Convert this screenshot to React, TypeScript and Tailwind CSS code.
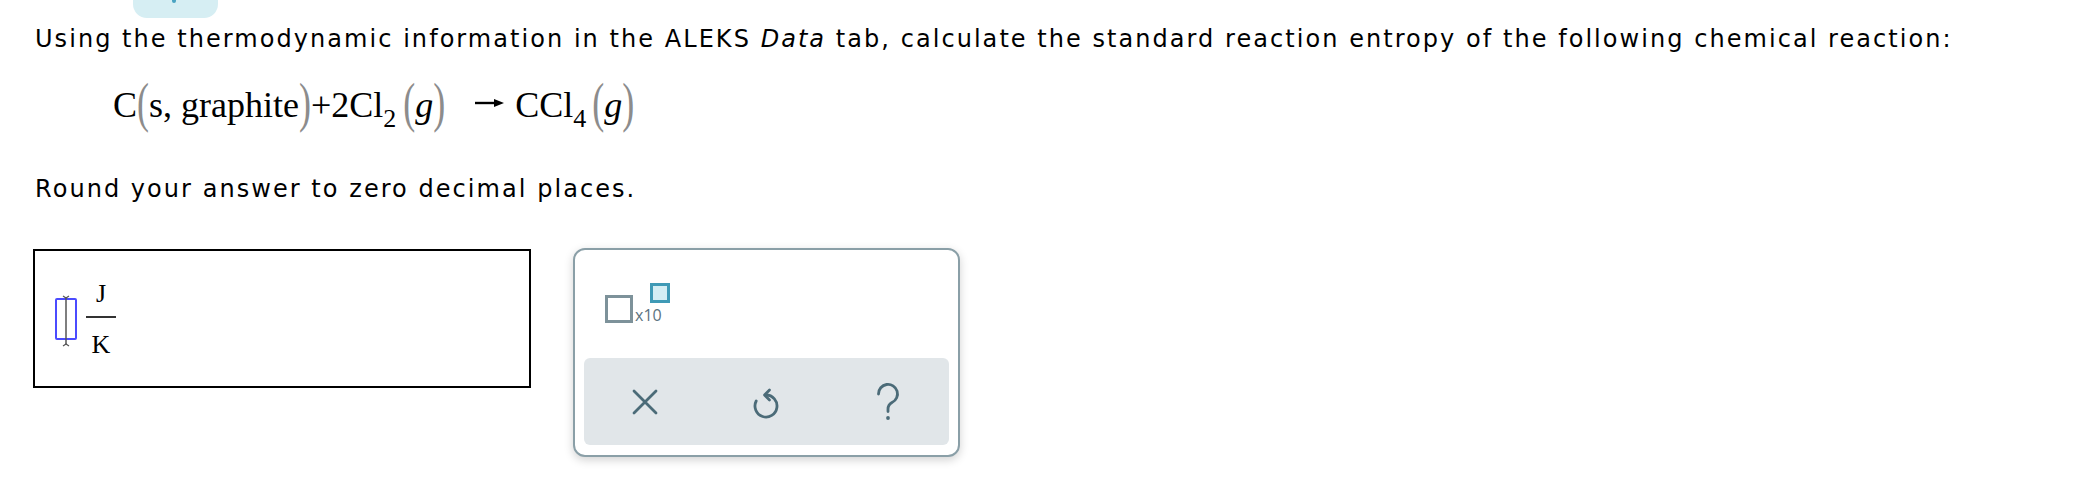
const serif = "font-['Liberation_Serif','Times_New_Roman',serif]";

function Paren({ children }: { children: string }) {
  return (
    <span className="inline-block -translate-y-[2px] scale-y-[1.5] text-[#8c8c8c]">
      {children}
    </span>
  );
}

function Equation() {
  return (
    <div className={`${serif} pl-[113px] text-[36px] leading-[48px] text-black`}>
      <span>C</span>
      <Paren>(</Paren>
      <span>s, graphite</span>
      <Paren>)</Paren>
      <span>+2Cl</span>
      <sub className="relative top-[10px] text-[26px]">2</sub>
      <span className="ml-[7px]" />
      <Paren>(</Paren>
      <i>g</i>
      <Paren>)</Paren>
      <svg
        className="ml-[29px] mr-[10px] inline-block align-[9px]"
        width="31"
        height="10"
        viewBox="0 0 31 10"
      >
        <line x1="1" y1="5" x2="23" y2="5" stroke="#000" strokeWidth="2.4" />
        <path d="M20 1 L30 5 L20 9 Z" fill="#000" />
      </svg>
      <span>CCl</span>
      <sub className="relative top-[10px] text-[26px]">4</sub>
      <span className="ml-[6px]" />
      <Paren>(</Paren>
      <i>g</i>
      <Paren>)</Paren>
    </div>
  );
}

function CursorSlot() {
  return (
    <div className="relative h-[42px] w-[22px] rounded-[2px] border-2 border-[#4b4bff]">
      <svg
        className="absolute left-[3px] top-[-5px]"
        width="12"
        height="52"
        viewBox="0 0 12 52"
      >
        <line x1="6" y1="2" x2="6" y2="50" stroke="#555" strokeWidth="1.5" />
        <path d="M3 1 L6 3 L9 1 M3 51 L6 49 L9 51" stroke="#555" strokeWidth="1.2" fill="none" />
      </svg>
    </div>
  );
}

function ClearIcon() {
  return (
    <svg width="26" height="26" viewBox="0 0 26 26" fill="none" stroke="#4b6b78" strokeWidth="2.8" strokeLinecap="round">
      <path d="M2 2 L24 24 M24 2 L2 24" />
    </svg>
  );
}

function UndoIcon() {
  return (
    <svg width="28" height="34" viewBox="0 0 28 34" fill="none" stroke="#4b6b78" strokeWidth="2.8" strokeLinecap="round" strokeLinejoin="round">
      <path d="M14 10 A11 11 0 1 1 4.2 16" />
      <path d="M17.5 5 L12.5 10 L17.5 15" />
    </svg>
  );
}

function HelpIcon() {
  return (
    <svg width="26" height="40" viewBox="0 0 26 40" fill="none" stroke="#4b6b78" strokeWidth="2.8" strokeLinecap="round">
      <path d="M3.5 12 A9.5 9.5 0 1 1 17 20.5 C14.5 22 13 24 13 27 V29.5" />
      <circle cx="13" cy="36" r="1.9" fill="#4b6b78" stroke="none" />
    </svg>
  );
}

export default function App() {
  return (
    <div className="h-[480px] w-[2078px] bg-white font-['DejaVu_Sans','Verdana',sans-serif] text-black">
      <div className="relative ml-[133px] h-[18px] w-[85px] rounded-b-[14px] bg-[#d6eef3]">
        <span className="absolute left-[39px] top-0 h-[3px] w-[4px] rounded-b-sm bg-[#4aa3c2]" />
      </div>

      <p className="mt-[3px] pl-[35px] text-[24px] leading-[36px] tracking-[2.05px]">
        Using the thermodynamic information in the ALEKS <i>Data</i> tab, calculate the
        standard reaction entropy of the following chemical reaction:
      </p>

      <div className="mt-[24px]">
        <Equation />
      </div>

      <p className="mt-[42px] pl-[35px] text-[24px] leading-[36px] tracking-[2.05px]">
        Round your answer to zero decimal places.
      </p>

      <div className="mt-[41px] flex items-start gap-[42px] pl-[33px]">
        <div className="mt-[1px] flex h-[139px] w-[498px] items-center border-2 border-black pl-[20px]">
          <CursorSlot />
          <div className={`${serif} ml-[9px] flex flex-col items-center text-[26px] leading-none`}>
            <span className="pb-[9px] pt-[2px]">J</span>
            <span className="h-[2px] w-[30px] bg-[#333]" />
            <span className="pt-[14px]">K</span>
          </div>
        </div>

        <div className="flex h-[209px] w-[387px] flex-col rounded-[12px] border-2 border-[#8a9fa7] bg-white px-[9px] pb-[10px] shadow-[0_3px_10px_rgba(0,0,0,0.18)]">
          <div className="flex flex-1 items-start pl-[21px] pt-[45px]">
            <div className="relative flex items-end">
              <span className="h-[28px] w-[28px] border-[3px] border-[#7d929a]" />
              <span className="ml-[2px] font-['Open_Sans',sans-serif] text-[16px] leading-[16px] text-[#5a7280]">
                x10
              </span>
              <span className="absolute left-[45px] top-[-12px] h-[20px] w-[20px] border-[3px] border-[#3f9ab6] bg-[#d4eef4]" />
            </div>
          </div>
          <div className="grid h-[87px] grid-cols-3 items-center rounded-[6px] bg-[#e1e6e9]">
            <div className="flex justify-center">
              <ClearIcon />
            </div>
            <div className="flex justify-center">
              <UndoIcon />
            </div>
            <div className="flex justify-center">
              <HelpIcon />
            </div>
          </div>
        </div>
      </div>
    </div>
  );
}
